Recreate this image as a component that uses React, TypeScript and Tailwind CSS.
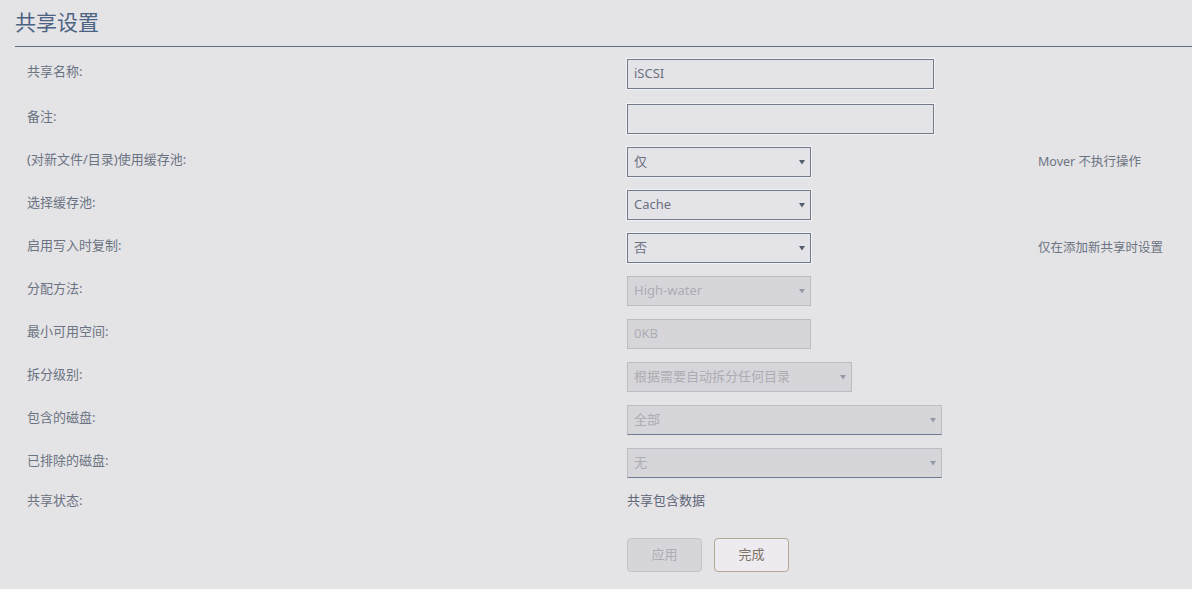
import React from 'react';

const font = { fontFamily: '"Noto Sans", "Noto Sans CJK SC", sans-serif' };

type Row = {
  label: string;
  kind: 'text' | 'select';
  value: string;
  width: string;
  disabled?: boolean;
  underline?: boolean;
  note?: string;
};

const rows: Row[] = [
  { label: '共享名称:', kind: 'text', value: 'iSCSI', width: 'w-[307px]' },
  { label: '备注:', kind: 'text', value: '', width: 'w-[307px]' },
  { label: '(对新文件/目录)使用缓存池:', kind: 'select', value: '仅', width: 'w-[184px]', note: 'Mover 不执行操作' },
  { label: '选择缓存池:', kind: 'select', value: 'Cache', width: 'w-[184px]' },
  { label: '启用写入时复制:', kind: 'select', value: '否', width: 'w-[184px]', note: '仅在添加新共享时设置' },
  { label: '分配方法:', kind: 'select', value: 'High-water', width: 'w-[184px]', disabled: true },
  { label: '最小可用空间:', kind: 'text', value: '0KB', width: 'w-[184px]', disabled: true },
  { label: '拆分级别:', kind: 'select', value: '根据需要自动拆分任何目录', width: 'w-[225px]', disabled: true },
  { label: '包含的磁盘:', kind: 'select', value: '全部', width: 'w-[315px]', disabled: true, underline: true },
  { label: '已排除的磁盘:', kind: 'select', value: '无', width: 'w-[315px]', disabled: true, underline: true },
];

function Arrow({ disabled }: { disabled?: boolean }) {
  return (
    <svg width="6" height="6" viewBox="0 0 6 6" className="absolute right-[5px] top-1/2 -translate-y-1/2">
      <path d="M0 1h6L3 5.5z" fill={disabled ? '#939aa6' : '#535c6a'} />
    </svg>
  );
}

function Field({ row }: { row: Row }) {
  const base = row.disabled
    ? 'bg-[#d6d5da] border-[#bdbcc2] text-[#adacb3]'
    : 'bg-[#e4e3e7] border-[#727b8b] text-[#6a7282] shadow-[0_0_0_1px_#f2f1f4]';
  return (
    <div
      className={`relative h-[30px] border ${base} ${row.width} ${row.underline ? 'border-b-[#6e7c92]' : ''} flex items-center pl-[6px] text-[13px]`}
    >
      {row.value}
      {row.kind === 'select' && <Arrow disabled={row.disabled} />}
    </div>
  );
}

export default function App() {
  return (
    <div className="min-h-[589px] w-[1192px] bg-[#e4e3e6] text-[13px] text-[#6b7383]" style={font}>
      <div className="pl-[15px] pt-[8px]">
        <h1 className="text-[21px] leading-[29px] text-[#4b6283]">共享设置</h1>
        <div className="mt-[9px] h-px bg-[#5f6e82]" />
      </div>

      <div className="pt-[12px]">
        {rows.map((row, i) => (
          <div key={row.label} className={`flex items-start ${i === 0 ? 'h-[45px]' : 'h-[43px]'}`}>
            <div className="w-[627px] pl-[27px] pt-[4px] leading-[17px]">{row.label}</div>
            <Field row={row} />
            {row.note && (
              <div className="ml-[227px] pt-[6px] text-[12.5px] leading-[17px] text-[#6c7482]">{row.note}</div>
            )}
          </div>
        ))}

        <div className="flex h-[47px] items-start pt-[1px]">
          <div className="w-[627px] pl-[27px] leading-[17px]">共享状态:</div>
          <div className="leading-[17px] text-[#5d6577]">共享包含数据</div>
        </div>

        <div className="flex gap-[12px] pl-[627px]">
          <button
            type="button"
            disabled
            className="h-[34px] w-[75px] rounded-[4px] border border-[#c4c3c8] bg-[#d6d5da] text-[13px] text-[#aeadb4]"
          >
            应用
          </button>
          <button
            type="button"
            className="h-[34px] w-[75px] rounded-[4px] border border-[#b7a793] bg-[#edebef] text-[13px] text-[#7d7264]"
          >
            完成
          </button>
        </div>
      </div>
    </div>
  );
}
